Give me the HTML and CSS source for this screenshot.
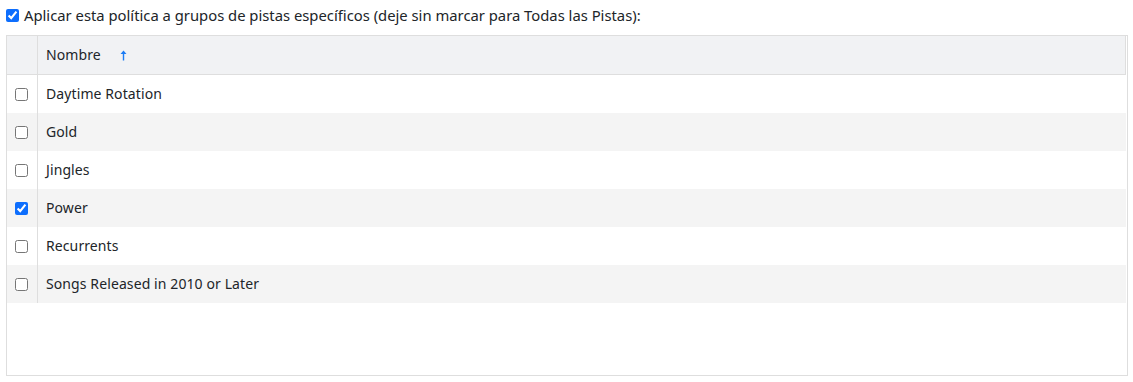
FILE: index.html
```html
<!DOCTYPE html>
<html>
    <head>
        <title>Grupos de pistas</title>
        <link rel="stylesheet" href="styles.css">
    </head>
    <body>
        <div class="page">
            <label class="apply-row">
                <input type="checkbox" class="check" checked>
                <span>Aplicar esta política a grupos de pistas específicos (deje sin marcar para Todas las Pistas):</span>
            </label>

            <div class="grid-box">
                <table class="grid">
                    <thead>
                        <tr>
                            <th class="sel-col"></th>
                            <th class="name-col">
                                Nombre
                                <svg class="sort-icon" width="7" height="11" viewBox="0 0 7 11">
                                    <path d="M3.5 0.5 L6.5 4 L4.2 4 L4.2 10.5 L2.8 10.5 L2.8 4 L0.5 4 Z" fill="#1c7cf4"/>
                                </svg>
                            </th>
                        </tr>
                    </thead>
                    <tbody>
                        <tr>
                            <td class="sel-col"><input type="checkbox" class="check"></td>
                            <td>Daytime Rotation</td>
                        </tr>
                        <tr class="alt">
                            <td class="sel-col"><input type="checkbox" class="check"></td>
                            <td>Gold</td>
                        </tr>
                        <tr>
                            <td class="sel-col"><input type="checkbox" class="check"></td>
                            <td>Jingles</td>
                        </tr>
                        <tr class="alt">
                            <td class="sel-col"><input type="checkbox" class="check" checked></td>
                            <td>Power</td>
                        </tr>
                        <tr>
                            <td class="sel-col"><input type="checkbox" class="check"></td>
                            <td>Recurrents</td>
                        </tr>
                        <tr class="alt">
                            <td class="sel-col"><input type="checkbox" class="check"></td>
                            <td>Songs Released in 2010 or Later</td>
                        </tr>
                    </tbody>
                </table>
            </div>
        </div>
    </body>
</html>
```

FILE: styles.css
```css
html, body {
    margin: 0;
    padding: 0;
    background: #ffffff;
}
body {
    font-family: "Noto Sans", "Open Sans", sans-serif;
    font-size: 14px;
    color: #212529;
}
.page {
    padding: 8px 6px 0 6px;
}
.apply-row {
    display: flex;
    align-items: center;
    gap: 5px;
    height: 14px;
    font-size: 14.8px;
}
.check {
    width: 13px;
    height: 13px;
    margin: 0;
    accent-color: #0d6efd;
}
.grid-box {
    margin-top: 13px;
    width: 1122px;
    height: 341px;
    box-sizing: border-box;
    border: 1px solid #dedede;
    overflow: hidden;
}
.grid {
    width: 1119px;
    border-collapse: collapse;
    table-layout: fixed;
    letter-spacing: 0.1px;
}
.grid th {
    height: 37px;
    padding: 0 0 1px 8px;
    background: #f1f2f4;
    border-bottom: 1px solid #dedede;
    border-right: 1px solid #dedede;
    text-align: left;
    font-weight: normal;
}
.grid td {
    height: 37px;
    padding: 0 0 1px 8px;
}
.grid .sel-col {
    width: 30px;
    padding: 0;
    text-align: center;
    border-right: 1px solid #dedede;
}
.grid td.sel-col .check {
    display: block;
    margin: 0 auto 0 8px;
}
.grid .alt td {
    background: #f4f4f4;
}
.sort-icon {
    margin-left: 15px;
    vertical-align: -1px;
}
```
